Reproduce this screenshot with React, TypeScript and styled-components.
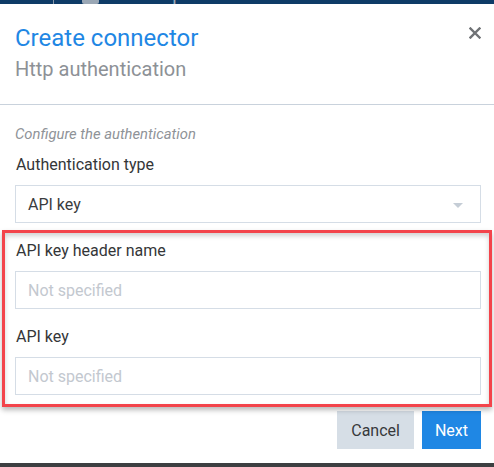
import React from "react";
import styled, { createGlobalStyle } from "styled-components";

const GlobalStyle = createGlobalStyle`
  html, body {
    margin: 0;
    padding: 0;
    background: #3d3f41;
  }
  body {
    font-family: Roboto, "Liberation Sans", Arial, sans-serif;
    -webkit-font-smoothing: antialiased;
  }
  * { box-sizing: border-box; }
`;

const Page = styled.div`
  width: 494px;
  display: flex;
  flex-direction: column;
`;

/* Application navigation bar that sits behind the dialog */
const NavBar = styled.div`
  height: 4px;
  background: #0e3b67;
  overflow: hidden;
  display: flex;
  align-items: flex-start;
`;

const NavItem = styled.span<{ $offset?: number }>`
  margin-top: -16px;
  margin-left: ${(p) => p.$offset ?? 0}px;
  font-size: 19px;
  line-height: 20px;
  color: #9aa7b5;
  white-space: nowrap;
`;

const NavDivider = styled.span`
  width: 1px;
  height: 20px;
  margin-top: -14px;
  margin-left: 18px;
  background: #8796a7;
`;

const NavIcon = styled.span`
  width: 17px;
  height: 16px;
  margin-top: -12px;
  margin-left: 28px;
  background: #9aa7b5;
  border-radius: 2px;
`;

const Dialog = styled.div`
  background: #ffffff;
  height: 459px;
  display: flex;
  flex-direction: column;
`;

const Header = styled.div`
  display: flex;
  justify-content: space-between;
  align-items: flex-start;
  padding: 20px 13px 23px 15px;
  border-bottom: 1px solid #c9d2dc;
`;

const Titles = styled.div`
  display: flex;
  flex-direction: column;
  gap: 5px;
`;

const Title = styled.h1`
  margin: 0;
  font-size: 24px;
  line-height: 28px;
  font-weight: 400;
  color: #1f87e4;
`;

const Subtitle = styled.h2`
  margin: 0;
  font-size: 20px;
  line-height: 24px;
  font-weight: 400;
  color: #8d9196;
`;

const CloseButton = styled.button`
  border: 0;
  background: none;
  padding: 0;
  margin-top: 3px;
  width: 12px;
  height: 12px;
  display: flex;
  cursor: pointer;
`;

const Body = styled.div`
  padding: 20px 13px 0 15px;
  display: flex;
  flex-direction: column;
`;

const Hint = styled.p`
  margin: 0 0 12px;
  font-size: 14.8px;
  line-height: 18px;
  font-style: italic;
  color: #8f9398;
`;

const Field = styled.div`
  display: flex;
  flex-direction: column;
  gap: 10px;
  & + & {
    margin-top: 18px;
  }
`;

const Label = styled.label`
  font-size: 16px;
  line-height: 20px;
  color: #343638;
  padding-left: 1px;
`;

const Control = styled.div`
  height: 38px;
  border: 1px solid #d5dde6;
  background: #ffffff;
  display: flex;
  align-items: center;
  justify-content: space-between;
  padding: 0 17px 0 12px;
  font-size: 16px;
`;

const Value = styled.span<{ $empty?: boolean }>`
  color: ${(p) => (p.$empty ? "#c3c8cf" : "#3a3c3e")};
`;

const Caret = styled.span`
  width: 0;
  height: 0;
  border-left: 5px solid transparent;
  border-right: 5px solid transparent;
  border-top: 5px solid #c5cdd6;
  margin-top: 2px;
`;

/* Group of fields outlined with a red call-out frame */
const Highlighted = styled.div`
  position: relative;
  margin-top: 18px;
  display: flex;
  flex-direction: column;

  &::after {
    content: "";
    position: absolute;
    top: -11px;
    left: -13px;
    right: -11px;
    bottom: -12px;
    border: 3px solid #f3444b;
    box-shadow: 0 3px 5px rgba(0, 0, 0, 0.28), inset 0 3px 5px rgba(0, 0, 0, 0.18);
    pointer-events: none;
  }
`;

const Footer = styled.div`
  display: flex;
  justify-content: flex-end;
  gap: 8px;
  margin-top: 16px;
`;

const Button = styled.button<{ $primary?: boolean }>`
  height: 38px;
  border: 0;
  border-radius: 0;
  padding: 0 ${(p) => (p.$primary ? 13 : 14)}px;
  font-family: inherit;
  font-size: 16px;
  background: ${(p) => (p.$primary ? "#1f87e4" : "#d6dee6")};
  color: ${(p) => (p.$primary ? "#ffffff" : "#37393b")};
  cursor: pointer;
`;

export default function App() {
  return (
    <>
      <GlobalStyle />
      <Page>
        <NavBar>
          <NavItem>ows</NavItem>
          <NavDivider />
          <NavIcon />
          <NavItem $offset={7}>Control panel</NavItem>
        </NavBar>
        <Dialog>
          <Header>
            <Titles>
              <Title>Create connector</Title>
              <Subtitle>Http authentication</Subtitle>
            </Titles>
            <CloseButton aria-label="Close">
              <svg width="12" height="12" viewBox="0 0 12 12">
                <path
                  d="M1.5 1.5 L10.5 10.5 M10.5 1.5 L1.5 10.5"
                  stroke="#6f7275"
                  strokeWidth="2.4"
                  strokeLinecap="square"
                />
              </svg>
            </CloseButton>
          </Header>
          <Body>
            <Hint>Configure the authentication</Hint>
            <Field>
              <Label>Authentication type</Label>
              <Control>
                <Value>API key</Value>
                <Caret />
              </Control>
            </Field>
            <Highlighted>
              <Field>
                <Label>API key header name</Label>
                <Control>
                  <Value $empty>Not specified</Value>
                </Control>
              </Field>
              <Field>
                <Label>API key</Label>
                <Control>
                  <Value $empty>Not specified</Value>
                </Control>
              </Field>
            </Highlighted>
            <Footer>
              <Button>Cancel</Button>
              <Button $primary>Next</Button>
            </Footer>
          </Body>
        </Dialog>
      </Page>
    </>
  );
}
